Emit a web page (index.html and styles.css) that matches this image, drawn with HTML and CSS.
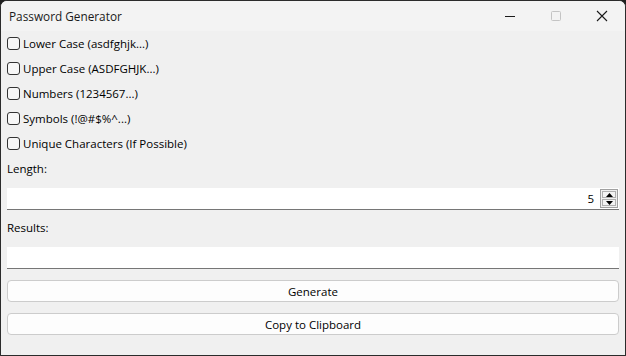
FILE: index.html
```html
<!DOCTYPE html>
<html>
<head>
<meta charset="utf-8">
<link rel="stylesheet" href="styles.css">
</head>
<body>
<div class="window">
  <div class="titlebar">
    <span class="title">Password Generator</span>
    <div class="controls">
      <span class="ctl"><svg width="12" height="12" viewBox="0 0 12 12"><path d="M1 6.5H11" stroke="#1a1a1a" stroke-width="1"/></svg></span>
      <span class="ctl"><svg width="12" height="12" viewBox="0 0 12 12"><rect x="1.5" y="1.5" width="9" height="9" rx="1" fill="none" stroke="#c4c4c4" stroke-width="1"/></svg></span>
      <span class="ctl"><svg width="12" height="12" viewBox="0 0 12 12"><path d="M1 1L11 11M11 1L1 11" stroke="#1a1a1a" stroke-width="1.1"/></svg></span>
    </div>
  </div>
  <div class="content">
    <label class="check"><span class="box"></span>Lower Case (asdfghjk...)</label>
    <label class="check"><span class="box"></span>Upper Case (ASDFGHJK...)</label>
    <label class="check"><span class="box"></span>Numbers (1234567...)</label>
    <label class="check"><span class="box"></span>Symbols (!@#$%^...)</label>
    <label class="check"><span class="box"></span>Unique Characters (If Possible)</label>
    <div class="label">Length:</div>
    <div class="field spin">
      <span class="value">5</span>
      <div class="arrows">
        <span class="arrow"><svg width="7" height="4" viewBox="0 0 7 4"><path d="M0 4L3.5 0L7 4Z" fill="#000"/></svg></span>
        <span class="arrow"><svg width="7" height="4" viewBox="0 0 7 4"><path d="M0 0L3.5 4L7 0Z" fill="#000"/></svg></span>
      </div>
    </div>
    <div class="label">Results:</div>
    <div class="field result"></div>
    <div class="btn">Generate</div>
    <div class="btn">Copy to Clipboard</div>
  </div>
</div>
</body>
</html>
```
FILE: styles.css
```css
html, body {
  margin: 0;
  padding: 0;
  width: 626px;
  height: 356px;
  overflow: hidden;
  background: #1f1f1f;
}
.window {
  box-sizing: border-box;
  width: 626px;
  height: 356px;
  border: 1px solid #2b2b2b;
  border-radius: 7px 7px 0 0;
  background: #f0f0f0;
  overflow: hidden;
  font-family: "Open Sans", "Noto Sans", sans-serif;
  font-size: 11.5px;
  color: #000;
  display: flex;
  flex-direction: column;
}
.titlebar {
  height: 30px;
  flex: none;
  background: #f3f3f3;
  display: flex;
  align-items: center;
  justify-content: space-between;
}
.title {
  padding-left: 8px;
  font-size: 11.8px;
  color: #1a1a1a;
  margin-top: -1px;
}
.controls {
  display: flex;
  height: 30px;
}
.ctl {
  width: 46px;
  height: 30px;
  display: flex;
  align-items: center;
  justify-content: center;
}
.content {
  padding: 0 6px;
  display: flex;
  flex-direction: column;
}
.check {
  height: 25px;
  display: flex;
  align-items: center;
  gap: 3px;
  line-height: 16px;
}
.box {
  box-sizing: border-box;
  width: 13px;
  height: 13px;
  border: 1px solid #333;
  border-radius: 3px;
  background: #f7f7f7;
}
.label {
  height: 25px;
  line-height: 25px;
  margin-bottom: 7px;
}
.field {
  box-sizing: border-box;
  height: 22px;
  background: #fff;
  border-bottom: 1px solid #767676;
  display: flex;
  align-items: center;
  justify-content: flex-end;
}
.spin {
  margin-bottom: 5px;
}
.result {
  margin-bottom: 11px;
}
.value {
  margin-right: 6px;
}
.arrows {
  display: flex;
  flex-direction: column;
  gap: 1px;
  margin-right: 1px;
  border: 1px solid #a0a0a0;
  padding: 1px;
  background: #f0f0f0;
}
.arrow {
  width: 14px;
  height: 7px;
  box-sizing: border-box;
  border: 1px solid #b0b0b0;
  background: #f3f3f3;
  display: flex;
  align-items: center;
  justify-content: center;
}
.btn {
  box-sizing: border-box;
  height: 22px;
  border: 1px solid #cccccc;
  border-radius: 4px;
  background: #fdfdfd;
  display: flex;
  align-items: center;
  justify-content: center;
  margin-bottom: 11px;
}
```
